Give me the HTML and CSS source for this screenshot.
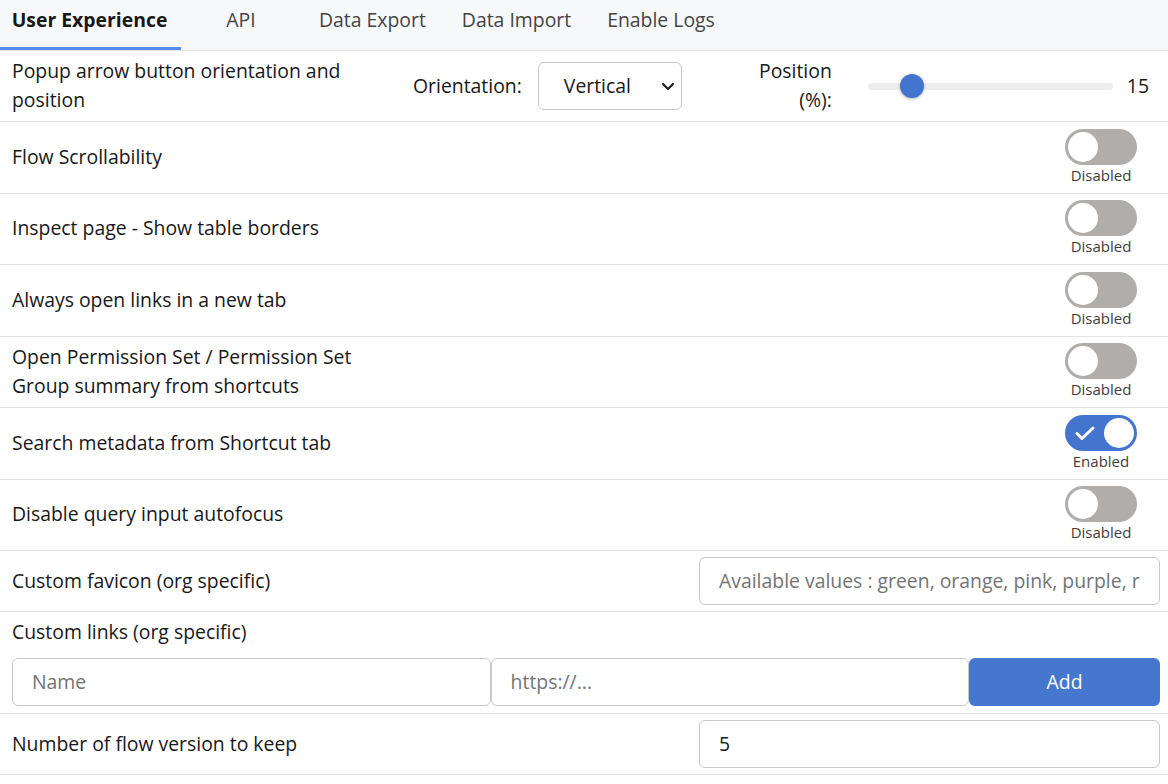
FILE: index.html
```html
<!DOCTYPE html>
<html>
<head>
<meta charset="utf-8">
<link rel="stylesheet" href="styles.css">
</head>
<body>
<nav class="tabs">
  <div class="tab active">User Experience</div>
  <div class="tab tab-api">API</div>
  <div class="tab">Data Export</div>
  <div class="tab">Data Import</div>
  <div class="tab">Enable Logs</div>
</nav>
<main class="list">
  <div class="row row-popup">
    <div class="label popup-label">Popup arrow button orientation and position</div>
    <div class="orient">
      <span class="orient-label">Orientation:</span>
      <div class="select">
        <span>Vertical</span>
        <svg width="16" height="16" viewBox="0 0 16 16"><path d="M3 6l5 5 5-5" fill="none" stroke="#222" stroke-width="2.2" stroke-linecap="round" stroke-linejoin="round"/></svg>
      </div>
    </div>
    <div class="pos-label">Position<br>(%):</div>
    <div class="slider"><div class="track"></div><div class="thumb"></div></div>
    <div class="pos-value">15</div>
  </div>
  <div class="row row-toggle">
    <div class="label">Flow Scrollability</div>
    <div class="toggle"><div class="switch"><div class="knob"></div></div><span class="state">Disabled</span></div>
  </div>
  <div class="row row-toggle">
    <div class="label">Inspect page - Show table borders</div>
    <div class="toggle"><div class="switch"><div class="knob"></div></div><span class="state">Disabled</span></div>
  </div>
  <div class="row row-toggle">
    <div class="label">Always open links in a new tab</div>
    <div class="toggle"><div class="switch"><div class="knob"></div></div><span class="state">Disabled</span></div>
  </div>
  <div class="row row-toggle">
    <div class="label narrow">Open Permission Set / Permission Set Group summary from shortcuts</div>
    <div class="toggle"><div class="switch"><div class="knob"></div></div><span class="state">Disabled</span></div>
  </div>
  <div class="row row-toggle">
    <div class="label">Search metadata from Shortcut tab</div>
    <div class="toggle"><div class="switch on"><svg class="check" width="22" height="18" viewBox="0 0 22 18"><path d="M3 9.5l5 5L19 4" fill="none" stroke="#fff" stroke-width="3" stroke-linecap="round" stroke-linejoin="round"/></svg><div class="knob"></div></div><span class="state">Enabled</span></div>
  </div>
  <div class="row row-toggle">
    <div class="label">Disable query input autofocus</div>
    <div class="toggle"><div class="switch"><div class="knob"></div></div><span class="state">Disabled</span></div>
  </div>
  <div class="row row-input">
    <div class="label">Custom favicon (org specific)</div>
    <input class="input" type="text" placeholder="Available values : green, orange, pink, purple, red">
  </div>
  <div class="row row-links">
    <div class="label">Custom links (org specific)</div>
    <div class="links">
      <input class="input link-name" type="text" placeholder="Name">
      <input class="input link-url" type="text" placeholder="https://...">
      <div class="btn">Add</div>
    </div>
  </div>
  <div class="row row-input">
    <div class="label">Number of flow version to keep</div>
    <input class="input" type="text" value="5">
  </div>
</main>
</body>
</html>
```
FILE: styles.css
```css
* { box-sizing: border-box; }
html, body { margin: 0; padding: 0; background: #fff; }
body {
  font-family: "Open Sans", "Noto Sans", sans-serif;
  font-size: 19.4px;
  color: #181818;
  width: 1168px;
}
.tabs {
  display: flex;
  height: 51px;
  background: #f7f8fa;
  border-bottom: 1px solid #e3e3e3;
}
.tab {
  display: flex;
  align-items: center;
  justify-content: center;
  padding: 0 18px 12px;
  color: #444;
  height: 50px;
}
.tab.active {
  font-weight: 700;
  color: #181818;
  width: 181px;
  padding-left: 8px;
  padding-right: 10px;
  border-bottom: 3px solid #5a8def;
  padding-bottom: 9px;
}
.tab-api { width: 120px; }
.list { display: flex; flex-direction: column; }
.row {
  display: flex;
  align-items: center;
  border-bottom: 1px solid #e5e5e5;
  padding: 0 8px 0 12px;
}
.label { line-height: 29px; flex: 1; margin-top: -2px; }
.row-popup { height: 71px; }
.popup-label { flex: 0 0 370px; }
.orient { display: flex; align-items: center; margin-left: 31px; }
.orient-label { margin-right: 16px; margin-top: -2px; }
.select {
  width: 144px;
  height: 48px;
  border: 1px solid #c9c9c9;
  border-radius: 6px;
  display: flex;
  align-items: center;
  justify-content: space-between;
  padding: 0 5px 0 25px;
  margin-top: -1px;
}
.pos-label {
  width: 80px;
  text-align: right;
  line-height: 29px;
  margin-left: 70px;
  margin-top: -3px;
}
.slider {
  position: relative;
  width: 245px;
  height: 24px;
  margin-left: 36px;
  display: flex;
  align-items: center;
}
.track { width: 100%; height: 7px; background: #ededed; border-radius: 4px; }
.thumb {
  position: absolute;
  left: 32px;
  top: 0;
  width: 24px;
  height: 24px;
  border-radius: 50%;
  background: #4375cf;
  box-shadow: 0 1px 3px rgba(0,0,0,0.3);
}
.pos-value { margin-left: 14px; margin-top: -2px; }
.row-toggle { height: 71.5px; }
.narrow { flex: 0 0 360px; margin-right: auto; }
.toggle {
  display: flex;
  flex-direction: column;
  align-items: center;
  width: 72px;
  margin-right: 23px;
  margin-top: -2px;
}
.switch {
  position: relative;
  width: 72px;
  height: 36px;
  border-radius: 18px;
  background: #b0adab;
}
.switch .knob {
  position: absolute;
  top: 3px;
  left: 3px;
  width: 30px;
  height: 30px;
  border-radius: 50%;
  background: #fff;
}
.switch.on { background: #4375cf; }
.switch.on .knob { left: 39px; }
.check { position: absolute; left: 9px; top: 9px; }
.state { font-size: 15px; color: #3e3e3c; line-height: 18px; margin-top: 1px; }
.row-input { height: 61px; }
.input {
  height: 48px;
  border: 1px solid #c9c9c9;
  border-radius: 6px;
  padding: 0 19px 2px;
  width: 461px;
  font: inherit;
  color: #181818;
  background: #fff;
  outline: none;
  margin: 0;
}
.input::placeholder { color: #747474; opacity: 1; }
.row-links {
  height: 102px;
  flex-direction: column;
  align-items: stretch;
  justify-content: flex-start;
}
.row-links .label { flex: none; margin-top: 5px; }
.links { display: flex; margin-top: 12px; }
.link-name { width: 479px; }
.link-url { width: 479px; }
.btn {
  width: 191px;
  height: 48px;
  background: #4677cf;
  color: #fff;
  border-radius: 6px;
  display: flex;
  align-items: center;
  justify-content: center;
  padding-bottom: 2px;
}
```
